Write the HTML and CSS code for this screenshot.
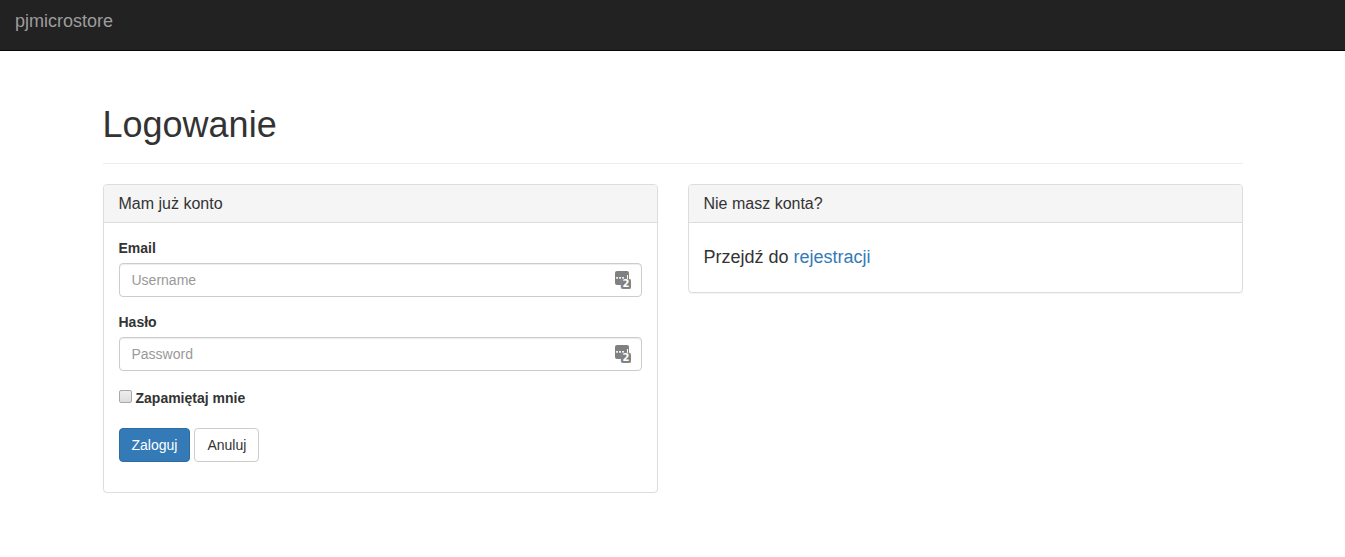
FILE: index.html
```html
<!DOCTYPE html>
<html lang="pl">
<head>
  <meta charset="utf-8">
  <meta name="viewport" content="width=device-width, initial-scale=1">
  <title>Logowanie - pjmicrostore</title>
  <link rel="stylesheet" href="styles.css">
</head>
<body>
  <nav class="navbar">
    <a class="navbar-brand" href="#">pjmicrostore</a>
  </nav>
  <main class="container">
    <header class="page-header">
      <h1>Logowanie</h1>
    </header>
    <div class="row">
      <section class="panel">
        <h2 class="panel-heading">Mam już konto</h2>
        <form class="panel-body">
          <div class="form-group">
            <label class="field-label" for="email">Email</label>
            <div class="field">
              <input class="form-control" id="email" type="text" placeholder="Username">
              <svg class="field-icon" viewBox="0 0 16 18" aria-hidden="true">
                <rect class="icon-base" width="14" height="14" rx="2"/>
                <path class="icon-mark" d="M1.2 6h1.7v1.7H1.2zM4.2 6h1.7v1.7H4.2zM7.2 6h1.7v1.7H7.2zM12 4h1v4h-1z"/>
                <rect class="icon-base icon-badge" x="6" y="8" width="10" height="10" rx="2"/>
                <text class="icon-count" x="11" y="16" text-anchor="middle">2</text>
              </svg>
            </div>
          </div>
          <div class="form-group">
            <label class="field-label" for="password">Hasło</label>
            <div class="field">
              <input class="form-control" id="password" type="password" placeholder="Password">
              <svg class="field-icon" viewBox="0 0 16 18" aria-hidden="true">
                <rect class="icon-base" width="14" height="14" rx="2"/>
                <path class="icon-mark" d="M1.2 6h1.7v1.7H1.2zM4.2 6h1.7v1.7H4.2zM7.2 6h1.7v1.7H7.2zM12 4h1v4h-1z"/>
                <rect class="icon-base icon-badge" x="6" y="8" width="10" height="10" rx="2"/>
                <text class="icon-count" x="11" y="16" text-anchor="middle">2</text>
              </svg>
            </div>
          </div>
          <div class="form-group remember">
            <input class="checkbox" id="remember" type="checkbox">
            <label for="remember">Zapamiętaj mnie</label>
          </div>
          <div class="form-group actions">
            <button class="btn btn-primary" type="submit">Zaloguj</button>
            <button class="btn" type="button">Anuluj</button>
          </div>
        </form>
      </section>
      <section class="panel">
        <h2 class="panel-heading">Nie masz konta?</h2>
        <div class="panel-body">
          <p class="register">Przejdź do <a href="#">rejestracji</a></p>
        </div>
      </section>
    </div>
  </main>
</body>
</html>
```
FILE: styles.css
```css
* {
  box-sizing: border-box;
}

body {
  margin: 0;
  background: #fff;
  color: #333;
  font-family: "Liberation Sans", Arial, sans-serif;
  font-size: 14px;
  line-height: 20px;
}

a {
  color: #337ab7;
  text-decoration: none;
}

.navbar {
  display: flex;
  align-items: flex-start;
  min-height: 51px;
  padding: 11px 15px;
  background: #222;
  border-bottom: 1px solid #080808;
}

.navbar-brand {
  color: #9d9d9d;
  font-size: 18px;
}

.container {
  max-width: 1170px;
  margin: 0 auto;
  padding: 54px 15px 0;
}

.page-header {
  margin-bottom: 20px;
  padding-bottom: 18px;
  border-bottom: 1px solid #eee;
}

h1 {
  margin: 0;
  font-size: 36px;
  font-weight: 500;
  line-height: 40px;
}

.row {
  display: grid;
  grid-template-columns: repeat(auto-fit, minmax(300px, 1fr));
  align-items: start;
  gap: 20px 30px;
}

.panel {
  border: 1px solid #ddd;
  border-radius: 4px;
  box-shadow: 0 1px 1px rgba(0, 0, 0, 0.05);
}

.panel-heading {
  margin: 0;
  padding: 10px 15px;
  background: #f5f5f5;
  border-bottom: 1px solid #ddd;
  border-radius: 3px 3px 0 0;
  font-size: 16px;
  font-weight: 500;
  line-height: 17px;
}

.panel-body {
  padding: 15px;
}

.form-group {
  margin-bottom: 15px;
}

label {
  font-weight: 700;
}

.field-label {
  display: block;
  margin-bottom: 5px;
}

.field {
  position: relative;
}

.form-control {
  display: block;
  width: 100%;
  height: 34px;
  padding: 6px 12px;
  border: 1px solid #ccc;
  border-radius: 4px;
  background: #fff;
  box-shadow: inset 0 1px 1px rgba(0, 0, 0, 0.075);
  color: #555;
  font: inherit;
}

.form-control::placeholder {
  color: #999;
  opacity: 1;
}

.field-icon {
  position: absolute;
  top: 8px;
  right: 11px;
  width: 16px;
  height: 18px;
}

.icon-base {
  fill: #808080;
}

.icon-badge {
  stroke: #999;
  stroke-width: 0.5;
}

.icon-mark {
  fill: #fff;
}

.icon-count {
  fill: #fff;
  font: 700 10px "DejaVu Sans", sans-serif;
}

.remember {
  display: flex;
  align-items: flex-start;
  gap: 4px;
  padding: 2px 0 5px;
}

.checkbox {
  appearance: none;
  width: 13px;
  height: 13px;
  margin: 2px 0 0;
  border: 1px solid #a9a9a9;
  border-radius: 2px;
  background: linear-gradient(#eee, #ddd);
}

.checkbox:checked {
  background: #337ab7;
}

.actions {
  display: flex;
  gap: 4px;
}

.btn {
  padding: 6px 12px;
  border: 1px solid #ccc;
  border-radius: 4px;
  background: #fff;
  color: #333;
  font: inherit;
  cursor: pointer;
}

.btn-primary {
  border-color: #2e6da4;
  background: #337ab7;
  color: #fff;
}

.register {
  margin: 10px 0;
  font-size: 18px;
  line-height: 19px;
}
```
